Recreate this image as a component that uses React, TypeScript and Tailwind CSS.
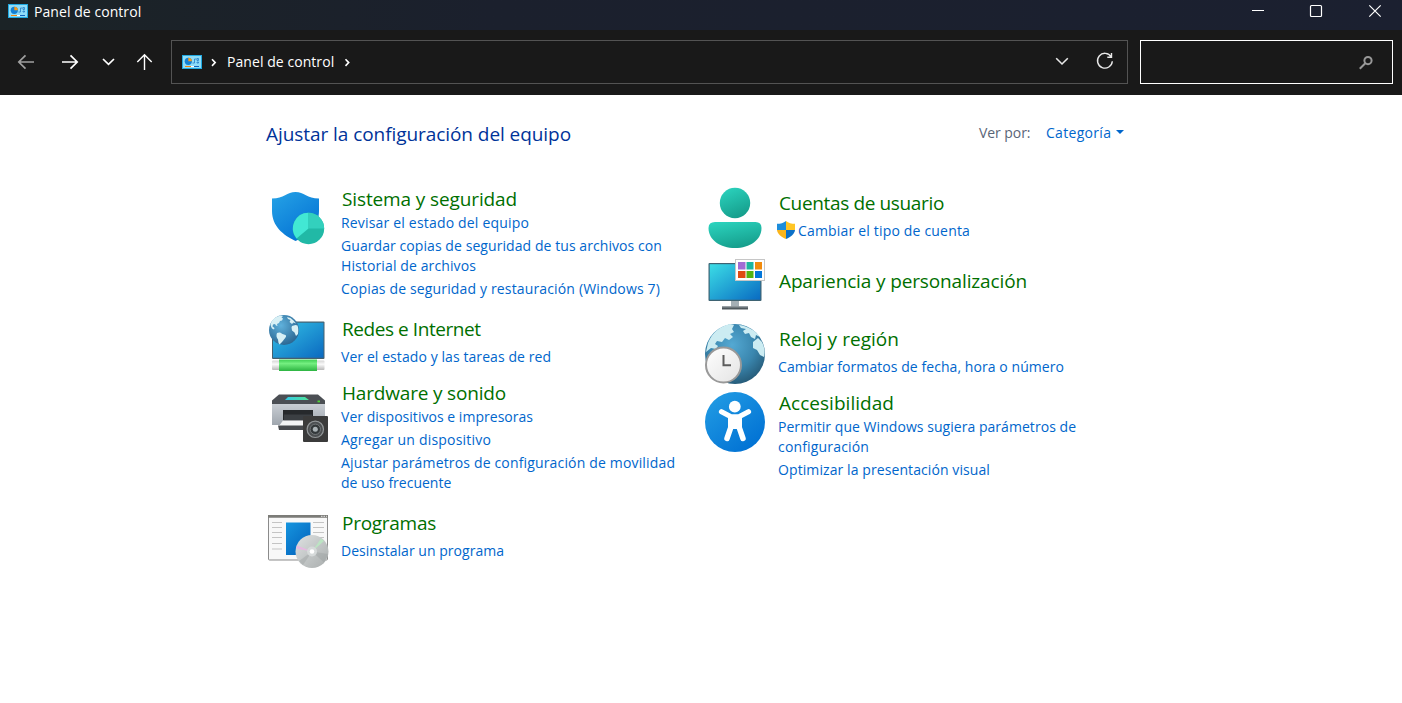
import React from 'react';

type Line = { text: string; track: string };
type Category = {
  title: string;
  titleTrack: string;
  box: string;
  icon: React.ReactNode;
  links: { lines: Line[]; shield?: boolean }[];
  linksBox?: string;
};

const FONT = "font-['Open_Sans','Noto_Sans',sans-serif]";

function PanelIcon() {
  return (
    <svg width="20" height="14" viewBox="0 0 20 14" className="shrink-0">
      <rect width="20" height="14" fill="#1fa9e1" />
      <rect x="1" y="1" width="18" height="12" fill="#8fdcf8" />
      <circle cx="6.300" cy="6.300" r="3.600" fill="#1280d4" />
      <path d="M6.300 6.300V2.700A3.600 3.600 0 0 1 9.900 6.300Z" fill="#f79a1c" />
      <path d="M10.500 8h2V4h2M15 3.500h1.500v2h-1.500zM15 7h1.500v1h-1.500z" fill="none" stroke="#2f86cc" strokeWidth="0.900" />
      <path d="M3 11.500h6" stroke="#f08a10" />
      <path d="M9 11.500h3" stroke="#fff" />
      <path d="M12 11.500h5" stroke="#1463bb" />
    </svg>
  );
}

function ShieldIcon() {
  return (
    <svg width="76" height="64" viewBox="266 187 76 64" className="shrink-0">
      <defs>
        <linearGradient id="shield" x1="0" y1="0" x2="0.7" y2="1">
          <stop stopColor="#26a3e6" />
          <stop offset="1" stopColor="#0472d4" />
        </linearGradient>
      </defs>
      <path d="M272 198.500C284 198.500 287 192 295.500 192C304 192 307 198.500 319 198.500V211C319 226 308 236 295.500 241C283 235 272 226 272 211Z" fill="url(#shield)" />
      <circle cx="308.500" cy="228.500" r="15.700" fill="#21b9a6" />
      <path d="M308.500 228.500L296.500 238.500A15.700 15.700 0 0 1 308.500 212.800Z" fill="#42e8d4" />
      <path d="M308.500 228.500V212.800A15.700 15.700 0 0 1 324.200 228.500Z" fill="#33d0bd" />
    </svg>
  );
}

function GlobeLand() {
  return (
    <>
      <path d="M3 19C5 11 10 6 17 3l6-2 5 1-3 3 3 2-2 4-4 1-2 4-4 2 1 4-3-1-2-3-4 1-1 4 4 3-1 3-4-2-2-4Z" />
      <path d="M16 36c4-2 8-1 11 2l6 2c3 3-1 6-3 9l-4 5-5 5c-3-3-2-6-3-10-3-4-4-8-2-13Z" />
      <path d="M36 4l7 2 6 5 5 6-5-2-3 3-5-4 2-4-5-2Z" />
      <path d="M46 22l7-2 4 1c2 5 2 11 1 17l-4 4-3-7-5-4-1-6Z" />
    </>
  );
}

function NetworkIcon() {
  return (
    <svg width="76" height="64" viewBox="266 311 76 64" className="shrink-0">
      <defs>
        <linearGradient id="netScreen" x1="0" y1="0" x2="1" y2="1">
          <stop stopColor="#34c3e6" />
          <stop offset="1" stopColor="#0b69c0" />
        </linearGradient>
        <radialGradient id="netGlobe" cx="0.4" cy="0.35" r="0.7">
          <stop stopColor="#5fb1dc" />
          <stop offset="1" stopColor="#2a648f" />
        </radialGradient>
        <linearGradient id="cable" x1="0" y1="0" x2="0" y2="1">
          <stop stopColor="#3fce52" />
          <stop offset="0.350" stopColor="#74ef80" />
          <stop offset="1" stopColor="#2cb441" />
        </linearGradient>
        <linearGradient id="plug" x1="0" y1="0" x2="0" y2="1">
          <stop stopColor="#d5d5d5" />
          <stop offset="0.400" stopColor="#fafafa" />
          <stop offset="1" stopColor="#b8b8b8" />
        </linearGradient>
      </defs>
      <rect x="272" y="321.500" width="52.500" height="37.500" rx="1" fill="#46606e" />
      <rect x="273" y="322.700" width="50.500" height="35" fill="url(#netScreen)" />
      <rect x="272" y="360.500" width="52.500" height="9.500" rx="1" fill="url(#plug)" />
      <rect x="279" y="359.500" width="38" height="11.500" fill="url(#cable)" />
      <circle cx="284" cy="330" r="15" fill="url(#netGlobe)" />
      <g transform="translate(269 315) scale(0.5)" fill="#d8f0f5">
        <GlobeLand />
      </g>
    </svg>
  );
}

function HardwareIcon() {
  return (
    <svg width="76" height="64" viewBox="266 381 76 64" className="shrink-0">
      <defs>
        <linearGradient id="printer" x1="0" y1="0" x2="0" y2="1">
          <stop stopColor="#c9ced4" />
          <stop offset="1" stopColor="#9fa6ae" />
        </linearGradient>
        <linearGradient id="scan">
          <stop stopColor="#35c8e5" />
          <stop offset="1" stopColor="#4ee39a" />
        </linearGradient>
      </defs>
      <path d="M279 394.500H318L325 400.500V405H272V400.500Z" fill="#4b4f54" />
      <path d="M288 397H305L309 400H285Z" fill="url(#scan)" />
      <rect x="317.500" y="400.500" width="2.500" height="1.800" fill="#4fd536" />
      <path d="M272 404H325V425H272Z" fill="url(#printer)" />
      <rect x="283" y="410" width="30" height="10.500" fill="#26292c" />
      <rect x="284" y="414.500" width="28" height="6" fill="#3b3f43" />
      <path d="M283 420.500H312V426H279Z" fill="#f3f4f5" />
      <path d="M278 425.500H304V430H279Z" fill="#474a4e" />
      <rect x="303" y="416" width="25" height="26" rx="1" fill="#3b3b3b" />
      <circle cx="315.300" cy="429.300" r="8.200" fill="#4c4f51" stroke="#929698" strokeWidth="1.200" />
      <circle cx="315.300" cy="429.300" r="5.200" fill="#33383a" stroke="#737779" strokeWidth="1" />
      <circle cx="315.300" cy="429.300" r="2.500" fill="#aab2b5" />
    </svg>
  );
}

function ProgramsIcon() {
  return (
    <svg width="76" height="64" viewBox="266 507 76 64" className="shrink-0">
      <defs>
        <linearGradient id="tile" x1="0" y1="0" x2="0.8" y2="1">
          <stop stopColor="#1695df" />
          <stop offset="1" stopColor="#0364bd" />
        </linearGradient>
        <linearGradient id="disc" x1="0" y1="0" x2="1" y2="1">
          <stop stopColor="#dfe2e2" />
          <stop offset="0.500" stopColor="#c3c7c7" />
          <stop offset="1" stopColor="#a9adad" />
        </linearGradient>
      </defs>
      <rect x="268.500" y="515.500" width="59" height="44.500" rx="1" fill="#f8f8f8" stroke="#8b8b8b" />
      <path d="M268 515H328V517.700H268Z" fill="#7c7c78" />
      <path d="M321 516.300h1.500M323.500 516.300h1.500M326 516.300h1" stroke="#e5e5e5" />
      <path d="M272 522.500h10M272 527.500h10M272 532.500h10M272 537.500h10M272 543.500h10M272 549h10M313 522.500h11M313 527.500h11M313 532.500h11M313 537.500h11" stroke="#c4c4c4" />
      <rect x="286" y="522.500" width="24.500" height="32.500" fill="url(#tile)" />
      <circle cx="312" cy="551.500" r="16.500" fill="url(#disc)" />
      <path d="M312 551.500L297 545.500L296 548.500Z" fill="#e7b9e2" />
      <path d="M312 551.500L321 538.500L324 541Z" fill="#bce4c3" />
      <path d="M312 551.500L328 554L324 562.500ZM312 551.500L303 565L299 561Z" fill="#989d9d" opacity="0.400" />
      <circle cx="312" cy="551.500" r="5" fill="#d6dada" />
      <circle cx="312" cy="551.500" r="2.300" fill="#fff" />
    </svg>
  );
}

function UsersIcon() {
  return (
    <svg width="74" height="64" viewBox="705 187 74 64" className="shrink-0">
      <defs>
        <linearGradient id="person" x1="0.2" y1="0" x2="0.6" y2="1">
          <stop stopColor="#2bd2bd" />
          <stop offset="1" stopColor="#159d8b" />
        </linearGradient>
      </defs>
      <circle cx="735" cy="203" r="15.200" fill="url(#person)" />
      <path d="M715 222H755.500Q761.500 222 761.500 228C761.500 240 750 248 735 248S708.500 240 708.500 228Q708.500 222 715 222Z" fill="url(#person)" />
    </svg>
  );
}

function AppearanceIcon() {
  return (
    <svg width="74" height="64" viewBox="705 251 74 64" className="shrink-0">
      <defs>
        <linearGradient id="screen" x1="0" y1="0" x2="1" y2="1">
          <stop stopColor="#3bdde6" />
          <stop offset="1" stopColor="#096bc2" />
        </linearGradient>
      </defs>
      <rect x="708.500" y="263" width="53" height="38" rx="1" fill="#3e6373" />
      <rect x="709.700" y="264.200" width="50.600" height="35.500" fill="url(#screen)" />
      <rect x="731" y="301" width="8" height="5.500" fill="#a5afb5" />
      <path d="M722 306.500H748V309.500H722Z" fill="#50585d" />
      <path d="M722 306.500H748V307.500H722Z" fill="#8d979c" />
      <rect x="735.500" y="259.500" width="29" height="21" fill="#fff" stroke="#c6c6c6" />
      <path d="M738 262h7.500v7.500h-7.500z" fill="#a16cd4" />
      <path d="M746.500 262h7v7.500h-7z" fill="#1cb5a0" />
      <path d="M755 262h7v7.500h-7z" fill="#f28b0c" />
      <path d="M738 271h7.500v7h-7.500z" fill="#df4b12" />
      <path d="M746.500 271h7v7h-7z" fill="#54b413" />
      <path d="M755 271h7v7h-7z" fill="#0377da" />
    </svg>
  );
}

function ClockIcon() {
  return (
    <svg width="74" height="64" viewBox="705 322 74 64" className="shrink-0">
      <defs>
        <radialGradient id="earth" cx="0.45" cy="0.35" r="0.7">
          <stop stopColor="#54a9d3" />
          <stop offset="0.550" stopColor="#3a86ae" />
          <stop offset="1" stopColor="#235571" />
        </radialGradient>
        <linearGradient id="dial" x1="0" y1="0" x2="1" y2="1">
          <stop stopColor="#fff" />
          <stop offset="1" stopColor="#e3e3e3" />
        </linearGradient>
      </defs>
      <circle cx="735" cy="354" r="30" fill="url(#earth)" />
      <g fill="#ccecf2">
        <path d="M708 343C712 333 720 326 730 324L734 325L732 329L734 332L730 334L733 337L729 340L725 338L722 342L717 341L715 344L718 346L716 349L711 348L706 352Z" />
        <path d="M739 325C748 326 756 331 760 337L756 335L755 339L751 337L749 333L745 334L743 331L746 329L741 328Z" />
        <path d="M753 342L758 338L762 342C765 348 765 354 764 357L760 355L757 350L753 348Z" />
      </g>
      <circle cx="723.500" cy="365" r="17.500" fill="url(#dial)" stroke="#999" strokeWidth="2" />
      <path d="M723.500 355V365.300H731" fill="none" stroke="#5c5c5c" strokeWidth="2" />
    </svg>
  );
}

function AccessIcon() {
  return (
    <svg width="74" height="64" viewBox="705 390 74 64" className="shrink-0">
      <defs>
        <linearGradient id="access" x1="0" y1="0" x2="0.8" y2="1">
          <stop stopColor="#249fe5" />
          <stop offset="1" stopColor="#0070d3" />
        </linearGradient>
      </defs>
      <circle cx="735" cy="422" r="30" fill="url(#access)" />
      <circle cx="734.800" cy="406.700" r="5.900" fill="#fff" />
      <path d="M728 416H742V429H728Z" fill="#fff" />
      <path d="M721.500 411.800L731 416.800H739L748.500 411.800" fill="none" stroke="#fff" strokeWidth="5.200" strokeLinecap="round" strokeLinejoin="round" />
      <path d="M731.300 426L727 438.500M738.700 426L743 438.500" stroke="#fff" strokeWidth="5.500" strokeLinecap="round" />
    </svg>
  );
}

function AdminShield() {
  return (
    <svg width="18" height="18" viewBox="0 0 18 18" className="mr-[3px] shrink-0">
      <path d="M9 0C6.500 2 3.500 2.800 0 2.800V9H9Z" fill="#1c8ddb" />
      <path d="M9 0C11.500 2 14.500 2.800 18 2.800V9H9Z" fill="#ffc524" />
      <path d="M0 9H9V18C4 16 .500 13 0 9Z" fill="#fbb51b" />
      <path d="M18 9H9V18C14 16 17.500 13 18 9Z" fill="#0c70c7" />
    </svg>
  );
}

const left: Category[] = [
  {
    title: 'Sistema y seguridad',
    titleTrack: 'tracking-[-0.12px]',
    box: 'h-[124px]',
    icon: <ShieldIcon />,
    links: [
      { lines: [{ text: 'Revisar el estado del equipo', track: 'tracking-[0.181px]' }] },
      {
        lines: [
          { text: 'Guardar copias de seguridad de tus archivos con', track: 'tracking-[0.072px]' },
          { text: 'Historial de archivos', track: 'tracking-[0.113px]' },
        ],
      },
      { lines: [{ text: 'Copias de seguridad y restauración (Windows 7)', track: 'tracking-[0.149px]' }] },
    ],
  },
  {
    title: 'Redes e Internet',
    titleTrack: 'tracking-[-0.43px]',
    box: 'h-[64px] pt-1.5',
    icon: <NetworkIcon />,
    linksBox: 'pt-1',
    links: [{ lines: [{ text: 'Ver el estado y las tareas de red', track: 'tracking-[0.08px]' }] }],
  },
  {
    title: 'Hardware y sonido',
    titleTrack: 'tracking-[-0.18px]',
    box: 'h-[126px]',
    icon: <HardwareIcon />,
    links: [
      { lines: [{ text: 'Ver dispositivos e impresoras', track: 'tracking-[0.03px]' }] },
      { lines: [{ text: 'Agregar un dispositivo', track: 'tracking-[0.21px]' }] },
      {
        lines: [
          { text: 'Ajustar parámetros de configuración de movilidad', track: 'tracking-[0.16px]' },
          { text: 'de uso frecuente', track: 'tracking-[0px]' },
        ],
      },
    ],
  },
  {
    title: 'Programas',
    titleTrack: 'tracking-[-0.274px]',
    box: 'h-[68px] pt-1',
    icon: <ProgramsIcon />,
    linksBox: 'pt-1',
    links: [{ lines: [{ text: 'Desinstalar un programa', track: 'tracking-[0.031px]' }] }],
  },
];

const right: Category[] = [
  {
    title: 'Cuentas de usuario',
    titleTrack: 'tracking-[-0.356px]',
    box: 'h-[64px] pt-1',
    icon: <UsersIcon />,
    linksBox: 'pt-1',
    links: [{ shield: true, lines: [{ text: 'Cambiar el tipo de cuenta', track: 'tracking-[0.18px]' }] }],
  },
  {
    title: 'Apariencia y personalización',
    titleTrack: 'tracking-[-0.133px]',
    box: 'h-[71px] pt-[18px]',
    icon: <AppearanceIcon />,
    links: [],
  },
  {
    title: 'Reloj y región',
    titleTrack: 'tracking-[0.04px]',
    box: 'h-[68px] pt-[5px]',
    icon: <ClockIcon />,
    linksBox: 'pt-1',
    links: [{ lines: [{ text: 'Cambiar formatos de fecha, hora o número', track: 'tracking-[0.065px]' }] }],
  },
  {
    title: 'Accesibilidad',
    titleTrack: 'tracking-[0.034px]',
    box: 'h-[96px] pt-px',
    icon: <AccessIcon />,
    links: [
      {
        lines: [
          { text: 'Permitir que Windows sugiera parámetros de', track: 'tracking-[0.045px]' },
          { text: 'configuración', track: 'tracking-[0.17px]' },
        ],
      },
      { lines: [{ text: 'Optimizar la presentación visual', track: 'tracking-[0.089px]' }] },
    ],
  },
];

function CategoryRow({ item, className = '' }: { item: Category; className?: string }) {
  return (
    <section className={`flex items-start ${className}`}>
      {item.icon}
      <div className={`whitespace-nowrap ${item.box}`}>
        <h2 className={`h-[26px] text-[19px] leading-[25px] text-[#006f00] ${item.titleTrack}`}>{item.title}</h2>
        <div className={`-ml-px flex flex-col gap-[3px] ${item.linksBox ?? ''}`}>
          {item.links.map((link) => (
            <a key={link.lines[0].text} href="#" className={`flex text-[14px] leading-[20px] text-[#0066cc] ${link.shield ? '-ml-px' : ''}`}>
              {link.shield && <AdminShield />}
              <span>
                {link.lines.map((l) => (
                  <span key={l.text} className={`block ${l.track}`}>{l.text}</span>
                ))}
              </span>
            </a>
          ))}
        </div>
      </div>
    </section>
  );
}

export default function App() {
  return (
    <div className={`flex h-[703px] w-[1402px] flex-col overflow-hidden bg-white ${FONT}`}>
      <header className="flex h-[30px] shrink-0 items-start justify-between bg-linear-to-r from-[#1b2326] via-[#1b202d] via-35% to-[#1b2030] pl-2 text-white">
        <div className="flex h-6 items-center gap-[6px]">
          <div className="-mt-[2px]"><PanelIcon /></div>
          <span className="text-[14px] leading-6 tracking-[0.06px]">Panel de control</span>
        </div>
        <svg width="150" height="24" viewBox="1252 0 150 24" fill="none" stroke="#fff">
          <path d="M1252 10.500H1264" />
          <rect x="1310.500" y="5.500" width="11" height="11" rx="1" strokeWidth="1.200" />
          <path d="M1369.300 5.300L1380.700 16.700M1380.700 5.300L1369.300 16.700" strokeWidth="1.200" />
        </svg>
      </header>

      <nav className="flex h-[65px] shrink-0 items-start bg-[#191919] pt-[10px] pr-[9px]">
        <svg width="171" height="44" viewBox="0 40 171 44" fill="none" stroke="#fff" strokeWidth="1.700" className="shrink-0">
          <path d="M34 62H18.800M25.500 55.300L18.800 62L25.500 68.700" stroke="#a0a0a0" />
          <path d="M62 62H77.200M70.500 55.300L77.200 62L70.500 68.700" />
          <path d="M103 59L108.500 64.300L114 59" />
          <path d="M144.500 70V54.700M137.300 62L144.500 54.700L151.700 62" strokeWidth="1.400" />
        </svg>
        <div className="flex h-11 w-[957px] shrink-0 items-center border border-[#535353] pl-[10px] text-white">
          <PanelIcon />
          <svg width="25" height="14" viewBox="0 0 25 14" fill="none" stroke="#fff" strokeWidth="1.600" className="shrink-0">
            <path d="M10 4.300L13.200 7.600L10 10.900" />
          </svg>
          <span className="text-[14px] leading-5 tracking-[0.06px]">Panel de control</span>
          <svg width="20" height="14" viewBox="0 0 20 14" fill="none" stroke="#fff" strokeWidth="1.600" className="shrink-0">
            <path d="M11.500 4.300L14.700 7.600L11.500 10.900" />
          </svg>
          <svg width="78" height="42" viewBox="1049 41 78 42" fill="none" stroke="#e8e8e8" strokeWidth="1.400" className="ml-auto shrink-0">
            <path d="M1056.200 58.300L1062 64L1067.800 58.300" strokeWidth="1.600" />
            <path d="M1111.200 56.800A7.400 7.400 0 1 0 1112.300 61.200M1111.500 53V57.200H1107.300" />
          </svg>
        </div>
        <div className="ml-3 flex h-11 w-[253px] shrink-0 items-center justify-end border border-white pr-[18px]">
          <svg width="16" height="16" viewBox="0 0 16 16" fill="none" stroke="#989898" className="mt-[2px]">
            <circle cx="10" cy="5.600" r="3.600" strokeWidth="2" />
            <path d="M7.300 8.300L1.800 13.800" strokeWidth="2" />
          </svg>
        </div>
      </nav>

      <main className="flex flex-1 flex-col pl-[266px] whitespace-nowrap">
        <div className="flex h-[92px] items-start pt-[25px]">
          <h1 className="w-[713px] pt-px text-[19px] leading-[27px] tracking-[-0.064px] text-[#003399]">Ajustar la configuración del equipo</h1>
          <div className="flex pt-[3px] text-[14px] leading-5">
            <span className="w-[67px] tracking-[-0.06px] text-[#5a6577]">Ver por:</span>
            <a href="#" className="flex items-center text-[#0066cc]">
              <span className="tracking-[0.3px]">Categoría</span>
              <svg width="8" height="4" viewBox="0 0 8 4" className="-mt-0.5 ml-[5px]">
                <path d="M0 0H8L4 4Z" fill="#0066cc" />
              </svg>
            </a>
          </div>
        </div>
        <div className="flex items-start">
          <div className="flex w-[439px] flex-col">
            {left.map((c, i) => <CategoryRow key={c.title} item={c} className={i === 2 ? 'mt-1.5' : ''} />)}
          </div>
          <div className="flex flex-col">
            {right.map((c) => <CategoryRow key={c.title} item={c} />)}
          </div>
        </div>
      </main>
    </div>
  );
}
